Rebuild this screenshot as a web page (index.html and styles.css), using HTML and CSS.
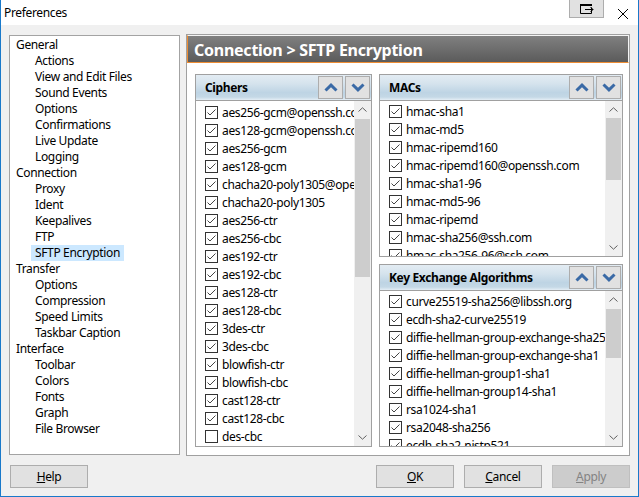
FILE: index.html
```html
<!DOCTYPE html>
<html>
<head>
<meta charset="utf-8">
<title>Preferences</title>
<link rel="stylesheet" href="styles.css">
</head>
<body>
<svg width="0" height="0" class="defs">
  <defs>
    <symbol id="chk-on" viewBox="0 0 13 13"><rect x="0.5" y="0.5" width="12" height="12" fill="#fff" stroke="#333"/><path d="M2.5 6.5 L5 9 L10.5 3.5" fill="none" stroke="#444"/></symbol>
    <symbol id="chk-off" viewBox="0 0 13 13"><rect x="0.5" y="0.5" width="12" height="12" fill="#fff" stroke="#333"/></symbol>
    <symbol id="chev-up" viewBox="0 0 14 9"><path d="M1.5 7.5 L7 2.2 L12.5 7.5" stroke="#3a6aa6" stroke-width="3" fill="none"/></symbol>
    <symbol id="chev-down" viewBox="0 0 14 9"><path d="M1.5 1.5 L7 6.8 L12.5 1.5" stroke="#3a6aa6" stroke-width="3" fill="none"/></symbol>
    <symbol id="sb-up" viewBox="0 0 9 5"><path d="M0.5 4.5 L4.5 0.8 L8.5 4.5" stroke="#606060" fill="none"/></symbol>
    <symbol id="sb-down" viewBox="0 0 9 5"><path d="M0.5 0.5 L4.5 4.2 L8.5 0.5" stroke="#606060" fill="none"/></symbol>
  </defs>
</svg>
<div class="window">
  <div class="titlebar">
    <span class="title">Preferences</span>
    <div class="tb-right">
      <div class="tb-btn">
        <svg width="14" height="10" viewBox="0 0 14 10"><path d="M11.5 3.5 V9.5 H0.5 V0.5 H11.5 V1.5" fill="none" stroke="#000"/><rect x="0" y="0" width="12" height="2" fill="#000"/><path d="M5 5.5 H13" stroke="#000"/><path d="M10.5 3 L13 5.5 L10.5 8" stroke="#000" fill="none"/></svg>
      </div>
      <div class="close">
        <svg width="10" height="10" viewBox="0 0 10 10"><path d="M0 0 L10 10 M10 0 L0 10" stroke="#000" stroke-width="1"/></svg>
      </div>
    </div>
  </div>
  <div class="main">
    <div class="tree">
      <div class="node">General</div>
      <div class="node child">Actions</div>
      <div class="node child">View and Edit Files</div>
      <div class="node child">Sound Events</div>
      <div class="node child">Options</div>
      <div class="node child">Confirmations</div>
      <div class="node child">Live Update</div>
      <div class="node child">Logging</div>
      <div class="node">Connection</div>
      <div class="node child">Proxy</div>
      <div class="node child">Ident</div>
      <div class="node child">Keepalives</div>
      <div class="node child">FTP</div>
      <div class="node child selected">SFTP Encryption</div>
      <div class="node">Transfer</div>
      <div class="node child">Options</div>
      <div class="node child">Compression</div>
      <div class="node child">Speed Limits</div>
      <div class="node child">Taskbar Caption</div>
      <div class="node">Interface</div>
      <div class="node child">Toolbar</div>
      <div class="node child">Colors</div>
      <div class="node child">Fonts</div>
      <div class="node child">Graph</div>
      <div class="node child">File Browser</div>
    </div>
    <div class="page">
      <div class="page-head">Connection &gt; SFTP Encryption</div>
      <div class="page-body">
        <div class="col-left">
          <div class="panel ciphers">
            <div class="panel-head">
              <span class="panel-title">Ciphers</span>
              <span class="pbtn"><svg width="14" height="9"><use href="#chev-up"/></svg></span>
              <span class="pbtn"><svg width="14" height="9"><use href="#chev-down"/></svg></span>
            </div>
            <div class="list">
              <div class="items pad2">
                <div class="row"><svg class="cb"><use href="#chk-on"/></svg><span>aes256-gcm@openssh.com</span></div>
                <div class="row"><svg class="cb"><use href="#chk-on"/></svg><span>aes128-gcm@openssh.com</span></div>
                <div class="row"><svg class="cb"><use href="#chk-on"/></svg><span>aes256-gcm</span></div>
                <div class="row"><svg class="cb"><use href="#chk-on"/></svg><span>aes128-gcm</span></div>
                <div class="row"><svg class="cb"><use href="#chk-on"/></svg><span>chacha20-poly1305@openssh.com</span></div>
                <div class="row"><svg class="cb"><use href="#chk-on"/></svg><span>chacha20-poly1305</span></div>
                <div class="row"><svg class="cb"><use href="#chk-on"/></svg><span>aes256-ctr</span></div>
                <div class="row"><svg class="cb"><use href="#chk-on"/></svg><span>aes256-cbc</span></div>
                <div class="row"><svg class="cb"><use href="#chk-on"/></svg><span>aes192-ctr</span></div>
                <div class="row"><svg class="cb"><use href="#chk-on"/></svg><span>aes192-cbc</span></div>
                <div class="row"><svg class="cb"><use href="#chk-on"/></svg><span>aes128-ctr</span></div>
                <div class="row"><svg class="cb"><use href="#chk-on"/></svg><span>aes128-cbc</span></div>
                <div class="row"><svg class="cb"><use href="#chk-on"/></svg><span>3des-ctr</span></div>
                <div class="row"><svg class="cb"><use href="#chk-on"/></svg><span>3des-cbc</span></div>
                <div class="row"><svg class="cb"><use href="#chk-on"/></svg><span>blowfish-ctr</span></div>
                <div class="row"><svg class="cb"><use href="#chk-on"/></svg><span>blowfish-cbc</span></div>
                <div class="row"><svg class="cb"><use href="#chk-on"/></svg><span>cast128-ctr</span></div>
                <div class="row"><svg class="cb"><use href="#chk-on"/></svg><span>cast128-cbc</span></div>
                <div class="row"><svg class="cb"><use href="#chk-off"/></svg><span>des-cbc</span></div>
              </div>
              <div class="sb">
                <div class="sb-arrow"><svg width="9" height="5"><use href="#sb-up"/></svg></div>
                <div class="sb-track"><div class="thumb" style="margin-top:1px;height:158px"></div></div>
                <div class="sb-arrow"><svg width="9" height="5"><use href="#sb-down"/></svg></div>
              </div>
            </div>
          </div>
        </div>
        <div class="col-right">
          <div class="panel macs">
            <div class="panel-head">
              <span class="panel-title">MACs</span>
              <span class="pbtn"><svg width="14" height="9"><use href="#chev-up"/></svg></span>
              <span class="pbtn"><svg width="14" height="9"><use href="#chev-down"/></svg></span>
            </div>
            <div class="list">
              <div class="items">
                <div class="row"><svg class="cb"><use href="#chk-on"/></svg><span>hmac-sha1</span></div>
                <div class="row"><svg class="cb"><use href="#chk-on"/></svg><span>hmac-md5</span></div>
                <div class="row"><svg class="cb"><use href="#chk-on"/></svg><span>hmac-ripemd160</span></div>
                <div class="row"><svg class="cb"><use href="#chk-on"/></svg><span>hmac-ripemd160@openssh.com</span></div>
                <div class="row"><svg class="cb"><use href="#chk-on"/></svg><span>hmac-sha1-96</span></div>
                <div class="row"><svg class="cb"><use href="#chk-on"/></svg><span>hmac-md5-96</span></div>
                <div class="row"><svg class="cb"><use href="#chk-on"/></svg><span>hmac-ripemd</span></div>
                <div class="row"><svg class="cb"><use href="#chk-on"/></svg><span>hmac-sha256@ssh.com</span></div>
                <div class="row"><svg class="cb"><use href="#chk-on"/></svg><span>hmac-sha256-96@ssh.com</span></div>
              </div>
              <div class="sb">
                <div class="sb-arrow"><svg width="9" height="5"><use href="#sb-up"/></svg></div>
                <div class="sb-track"><div class="thumb" style="margin-top:0px;height:62px"></div></div>
                <div class="sb-arrow"><svg width="9" height="5"><use href="#sb-down"/></svg></div>
              </div>
            </div>
          </div>
          <div class="panel kex">
            <div class="panel-head">
              <span class="panel-title">Key Exchange Algorithms</span>
              <span class="pbtn"><svg width="14" height="9"><use href="#chev-up"/></svg></span>
              <span class="pbtn"><svg width="14" height="9"><use href="#chev-down"/></svg></span>
            </div>
            <div class="list">
              <div class="items">
                <div class="row"><svg class="cb"><use href="#chk-on"/></svg><span>curve25519-sha256@libssh.org</span></div>
                <div class="row"><svg class="cb"><use href="#chk-on"/></svg><span>ecdh-sha2-curve25519</span></div>
                <div class="row"><svg class="cb"><use href="#chk-on"/></svg><span>diffie-hellman-group-exchange-sha256</span></div>
                <div class="row"><svg class="cb"><use href="#chk-on"/></svg><span>diffie-hellman-group-exchange-sha1</span></div>
                <div class="row"><svg class="cb"><use href="#chk-on"/></svg><span>diffie-hellman-group1-sha1</span></div>
                <div class="row"><svg class="cb"><use href="#chk-on"/></svg><span>diffie-hellman-group14-sha1</span></div>
                <div class="row"><svg class="cb"><use href="#chk-on"/></svg><span>rsa1024-sha1</span></div>
                <div class="row"><svg class="cb"><use href="#chk-on"/></svg><span>rsa2048-sha256</span></div>
                <div class="row"><svg class="cb"><use href="#chk-on"/></svg><span>ecdh-sha2-nistp521</span></div>
              </div>
              <div class="sb">
                <div class="sb-arrow"><svg width="9" height="5"><use href="#sb-up"/></svg></div>
                <div class="sb-track"><div class="thumb" style="margin-top:1px;height:49px"></div></div>
                <div class="sb-arrow"><svg width="9" height="5"><use href="#sb-down"/></svg></div>
              </div>
            </div>
          </div>
        </div>
      </div>
    </div>
  </div>
  <div class="footer">
    <span class="btn"><u>H</u>elp</span>
    <span class="spacer"></span>
    <span class="btn"><u>O</u>K</span>
    <span class="btn"><u>C</u>ancel</span>
    <span class="btn disabled"><u>A</u>pply</span>
  </div>
</div>
</body>
</html>
```

FILE: styles.css
```css
* { box-sizing: border-box; }

html, body {
  margin: 0;
  padding: 0;
  background: #f0f0f0;
}

body {
  font-family: "Noto Sans", "Open Sans", sans-serif;
  font-size: 12px;
  letter-spacing: -0.35px;
  color: #000;
}

.defs {
  position: absolute;
  width: 0;
  height: 0;
}

.window {
  width: 639px;
  height: 497px;
  border: 1px solid #1979ca;
  border-top: none;
  background: #f0f0f0;
  display: flex;
  flex-direction: column;
  overflow: hidden;
}

/* title bar */
.titlebar {
  flex: none;
  height: 25px;
  background: #fff;
  display: flex;
  justify-content: space-between;
  align-items: flex-start;
}

.title {
  padding-left: 3px;
  line-height: 25px;
}

.tb-right {
  display: flex;
  align-items: flex-start;
}

.tb-btn {
  width: 35px;
  height: 18px;
  background: #e1e1e1;
  border: 1px solid #adadad;
  border-top: none;
  display: flex;
  align-items: center;
  justify-content: center;
}

.close {
  width: 10px;
  height: 10px;
  margin: 9px 10px 0 14px;
  display: flex;
}

/* main area */
.main {
  flex: none;
  height: 431px;
  display: flex;
  align-items: flex-start;
  padding: 9px 8px 0 8px;
}

.tree {
  width: 171px;
  height: 420px;
  margin: 1px 6px 0 0;
  border: 1px solid #a3a3a3;
  background: #fff;
  padding-top: 1px;
}

.node {
  height: 16px;
  line-height: 16px;
  padding-left: 6px;
  white-space: nowrap;
  width: fit-content;
}

.node.child {
  margin-left: 21px;
  padding: 0 4px;
}

.node.selected {
  background: #cce8ff;
}

.page {
  width: 444px;
  height: 422px;
  border: 1px solid #a0a0a0;
  background: #fff;
  display: flex;
  flex-direction: column;
}

.page-head {
  flex: none;
  height: 28px;
  border: 1px solid;
  border-color: #f4f4f4 #f4f4f4 #ee8d33 #ee8d33;
  background: linear-gradient(#808080, #5b5b5b);
  color: #fff;
  font-weight: bold;
  font-size: 16px;
  letter-spacing: -0.25px;
  line-height: 26px;
  padding: 1px 0 0 6px;
  white-space: nowrap;
}

.page-body {
  flex: 1;
  display: flex;
  gap: 7px;
  padding: 11px 6px 0 8px;
}

.col-left {
  width: 177px;
  display: flex;
  flex-direction: column;
}

.col-right {
  width: 244px;
  display: flex;
  flex-direction: column;
  gap: 7px;
}

.panel {
  display: flex;
  flex-direction: column;
}

.ciphers { height: 373px; }
.macs { height: 183px; }
.kex { height: 183px; }

.panel-head {
  flex: none;
  height: 26px;
  border: 1px solid #a0a0a0;
  border-bottom: none;
  background: linear-gradient(#e3ecf3 0%, #d5e3ed 35%, #bed4e4 70%, #c4d8e6 88%, #e4eef5 100%);
  display: flex;
  align-items: flex-start;
  padding: 1px 1px 0 9px;
}

.panel-title {
  flex: 1;
  font-weight: bold;
  line-height: 24px;
  white-space: nowrap;
}

.pbtn {
  width: 25px;
  height: 23px;
  margin-left: 2px;
  background: #e1e1e1;
  border: 1px solid #adadad;
  display: flex;
  align-items: center;
  justify-content: center;
}

.list {
  flex: 1;
  min-height: 0;
  border: 1px solid #a0a0a0;
  background: #fff;
  display: flex;
}

.items {
  flex: 1;
  min-width: 0;
  overflow: hidden;
  padding-top: 1px;
}

.items.pad2 { padding-top: 2px; }

.row {
  height: 18px;
  display: flex;
  align-items: center;
  padding-left: 9px;
  white-space: nowrap;
}

.cb {
  width: 13px;
  height: 13px;
  flex: none;
  margin-right: 4px;
}

.sb {
  width: 17px;
  flex: none;
  background: #f0f0f0;
  display: flex;
  flex-direction: column;
}

.sb-arrow {
  flex: none;
  height: 17px;
  display: flex;
  align-items: center;
  justify-content: center;
}

.sb-track {
  flex: 1;
}

.thumb {
  margin-left: 1px;
  margin-right: 1px;
  background: #cdcdcd;
}

/* footer */
.footer {
  flex: 1;
  display: flex;
  align-items: flex-start;
  gap: 10px;
  padding: 9px 8px 0 9px;
}

.spacer { flex: 1; }

.btn {
  width: 78px;
  height: 23px;
  background: #e1e1e1;
  border: 1px solid #adadad;
  display: flex;
  align-items: center;
  justify-content: center;
  line-height: 1;
}

.btn.disabled {
  background: #cccccc;
  border-color: #bfbfbf;
  color: #838383;
}
```
